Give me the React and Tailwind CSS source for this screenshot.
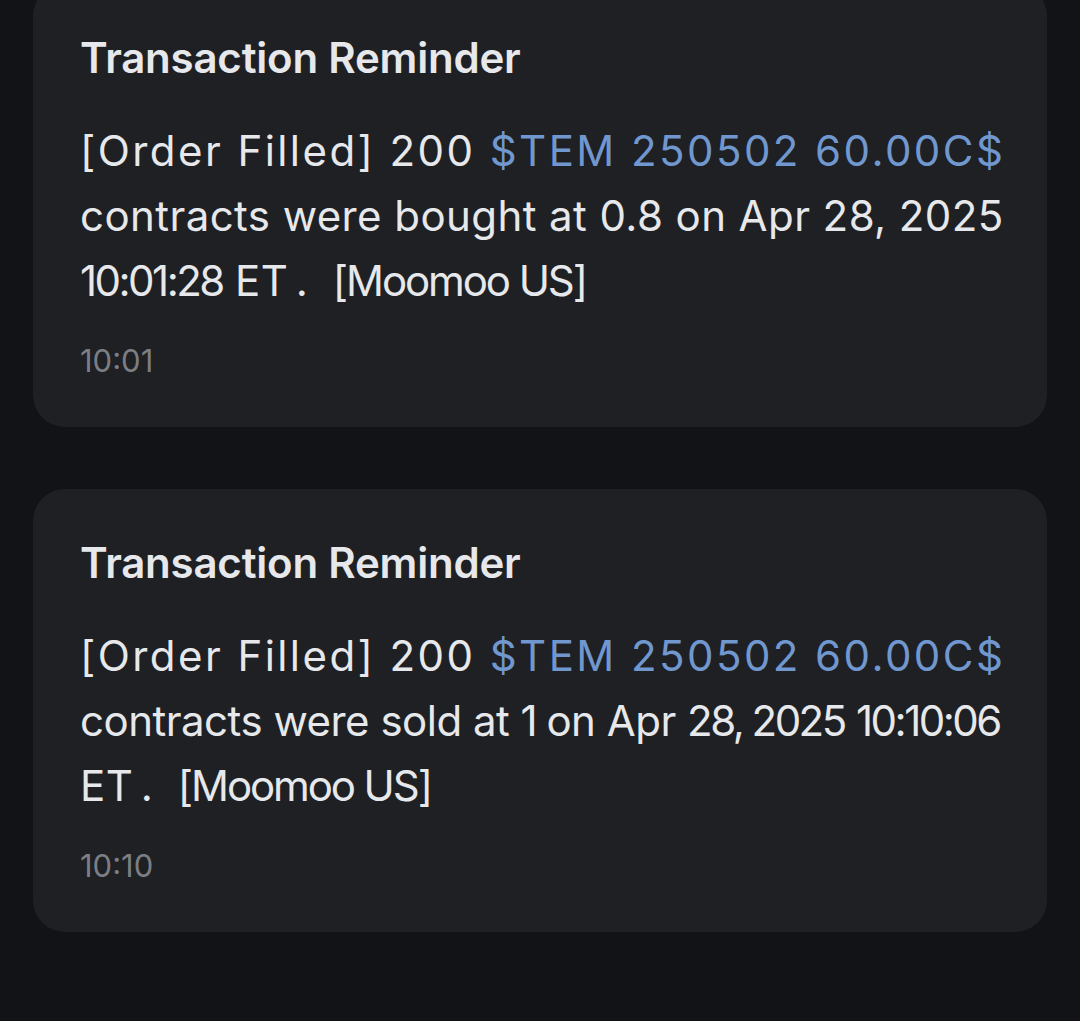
import React from "react";

const N = ({ children }) => <span className="tracking-[-0.06em]">{children}</span>;
const M = ({ children }) => <span className="tracking-[-0.05em]">{children}</span>;

function Card({ lines, time }) {
  return (
    <div className="rounded-[32px] bg-[#1e2024] pl-[47px] pr-[20px] pt-[49px] pb-[46px]">
      <div className="text-[42px] font-semibold leading-[50px] tracking-[-0.005em] text-[#e6e8eb]">Transaction Reminder</div>
      <div className="mt-[35px] text-[42px] leading-[65px] tracking-[0.01em] text-[#e6e8eb]">
        <div className="whitespace-nowrap tracking-[0.058em]">
          [Order Filled] 200 <span className="text-[#7197cf]">$TEM 250502 60.00C$</span>
        </div>
        {lines}
      </div>
      <div className="mt-[28px] text-[31px] leading-[40px] text-[#7b7e83]">{time}</div>
    </div>
  );
}

export default function App() {
  return (
    <div className="flex h-[1021px] flex-col overflow-hidden bg-[#111316] px-[33px]" style={{ fontFamily: "Inter, 'Noto Sans', sans-serif" }}>
      <div className="-mt-[16px] flex flex-col gap-[62px]">
        <Card
          lines={
            <>
              <div className="whitespace-nowrap">contracts were bought at 0.8 on Apr 28, 2025</div>
              <div className="whitespace-nowrap">
                <N>10:01:28</N> ET<span className="tracking-[-0.1em]"> </span>.&nbsp; <M>[Moomoo US]</M>
              </div>
            </>
          }
          time="10:01"
        />
        <Card
          lines={
            <>
              <div className="whitespace-nowrap tracking-[-0.012em]">
                contracts were sold at <N>1</N> on Apr <N>28, 2025</N> <N>10:10:06</N>
              </div>
              <div className="whitespace-nowrap">
                ET<span className="tracking-[-0.1em]"> </span>.&nbsp; <M>[Moomoo US]</M>
              </div>
            </>
          }
          time="10:10"
        />
      </div>
    </div>
  );
}
